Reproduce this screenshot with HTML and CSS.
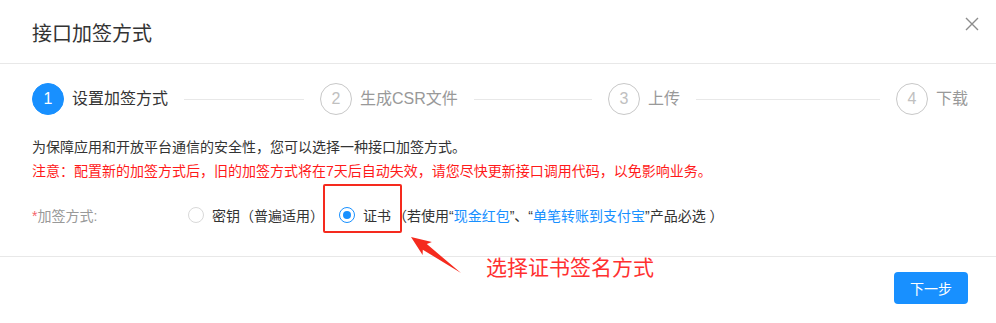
FILE: index.html
```html
<!DOCTYPE html>
<html lang="zh-CN">
<head>
<meta charset="utf-8">
<title>接口加签方式</title>
<link rel="stylesheet" href="styles.css">
</head>
<body>
<div class="modal">
  <div class="header">
    <div class="title">接口加签方式</div>
    <span class="close">
      <svg width="14" height="14" viewBox="0 0 14 14"><path d="M1 1L13 13M13 1L1 13" stroke="#8c8c8c" stroke-width="1.4" fill="none"/></svg>
    </span>
  </div>
  <div class="body">
    <div class="steps">
      <div class="step active">
        <div class="step-icon">1</div>
        <div class="step-title">设置加签方式</div>
        <div class="step-line"></div>
      </div>
      <div class="step">
        <div class="step-icon">2</div>
        <div class="step-title">生成CSR文件</div>
        <div class="step-line"></div>
      </div>
      <div class="step">
        <div class="step-icon">3</div>
        <div class="step-title">上传</div>
        <div class="step-line"></div>
      </div>
      <div class="step">
        <div class="step-icon">4</div>
        <div class="step-title">下载</div>
      </div>
    </div>
    <p class="desc">为保障应用和开放平台通信的安全性，您可以选择一种接口加签方式。</p>
    <p class="warn">注意：配置新的加签方式后，旧的加签方式将在7天后自动失效，请您尽快更新接口调用代码，以免影响业务。</p>
    <div class="form-row">
      <div class="form-label"><span class="req">*</span>加签方式:</div>
      <div class="radio-group">
        <label class="radio-item first"><span class="radio"></span><span class="radio-text">密钥（普遍适用）</span></label>
        <label class="radio-item"><span class="radio checked"></span><span class="radio-text">证书</span></label>
        <span class="extra">（若使用“<span class="link">现金红包</span>”、“<span class="link">单笔转账到支付宝</span>”产品必选 ）</span>
      </div>
    </div>
  </div>
  <div class="footer">
    <button class="btn-primary">下一步</button>
  </div>
  <div class="mark-box"></div>
  <svg class="mark-arrow" width="70" height="50" viewBox="0 0 70 50"><polygon points="11,7 22.6,25.1 22.8,19.7 61,43 26.8,14.1 31.9,12.1" fill="#f52a1e"/></svg>
  <div class="mark-text">选择证书签名方式</div>
</div>
</body>
</html>
```
FILE: styles.css
```css
html, body {
  margin: 0;
  padding: 0;
  background: #fff;
}
body {
  font-family: "Liberation Sans", "Noto Sans CJK SC", sans-serif;
  color: #333;
  font-size: 14px;
}
.modal {
  position: relative;
  width: 996px;
  height: 323px;
}
.header {
  height: 64px;
  box-sizing: border-box;
  border-bottom: 1px solid #e8e8e8;
  padding: 22px 32px 0;
}
.title {
  font-size: 20px;
  line-height: 24px;
  color: #333;
}
.close {
  position: absolute;
  top: 17px;
  right: 17px;
  width: 14px;
  height: 14px;
  display: block;
}
.close svg { display: block; }
.body {
  padding: 19px 28px 25px 32px;
  border-bottom: 1px solid #e8e8e8;
}
.steps {
  display: flex;
  align-items: center;
  height: 32px;
}
.step {
  display: flex;
  align-items: center;
  flex: 1 1 0;
  min-width: 0;
}
.step:last-child {
  flex: none;
}
.step-icon {
  width: 32px;
  height: 32px;
  box-sizing: border-box;
  border-radius: 50%;
  border: 1px solid #c8c8c8;
  color: #c0c0c0;
  display: flex;
  align-items: center;
  justify-content: center;
  font-size: 16px;
  font-family: "Liberation Sans", sans-serif;
  flex: none;
}
.step.active .step-icon {
  background: #1890ff;
  border-color: #1890ff;
  color: #fff;
}
.step-title {
  margin-left: 8px;
  font-size: 16px;
  line-height: 24px;
  color: #999;
  white-space: nowrap;
}
.step.active .step-title {
  color: #333;
}
.step-line {
  flex: 1;
  height: 1px;
  background: #e8e8e8;
  margin: 0 16px;
}
.desc, .warn {
  margin: 0;
  line-height: 24px;
  font-size: 14px;
}
.desc {
  margin-top: 20px;
  color: #333;
}
.warn {
  color: #ff1a1a;
}
.form-row {
  display: flex;
  align-items: center;
  height: 32px;
  margin-top: 16px;
}
.form-label {
  width: 156px;
  color: #999;
  font-size: 14px;
}
.req {
  color: #f5646a;
}
.radio-group {
  display: flex;
  align-items: center;
  white-space: nowrap;
}
.radio-item {
  display: flex;
  align-items: center;
}
.radio-item.first {
  margin-right: 15px;
}
.radio {
  width: 16px;
  height: 16px;
  box-sizing: border-box;
  border-radius: 50%;
  border: 1px solid #d9d9d9;
  display: flex;
  align-items: center;
  justify-content: center;
}
.radio.checked {
  border-color: #1890ff;
}
.radio.checked::after {
  content: "";
  width: 8px;
  height: 8px;
  border-radius: 50%;
  background: #1890ff;
}
.radio-text {
  margin-left: 8px;
  color: #333;
}
.extra {
  margin-left: 2px;
  color: #333;
}
.link {
  color: #1890ff;
}
.footer {
  display: flex;
  justify-content: flex-end;
  padding: 15px 28px 0 32px;
}
.btn-primary {
  width: 74px;
  height: 32px;
  border: none;
  border-radius: 4px;
  background: #1890ff;
  color: #fff;
  font-family: "Liberation Sans", "Noto Sans CJK SC", sans-serif;
  font-size: 14px;
  padding: 0;
}
.mark-box {
  position: absolute;
  left: 323px;
  top: 184px;
  width: 79px;
  height: 49px;
  box-sizing: border-box;
  border: 2px solid #f52a1e;
  border-radius: 2px;
}
.mark-arrow {
  position: absolute;
  left: 400px;
  top: 230px;
}
.mark-text {
  position: absolute;
  left: 486px;
  top: 256px;
  font-size: 21px;
  line-height: 24px;
  color: #ff3030;
  white-space: nowrap;
}
```
